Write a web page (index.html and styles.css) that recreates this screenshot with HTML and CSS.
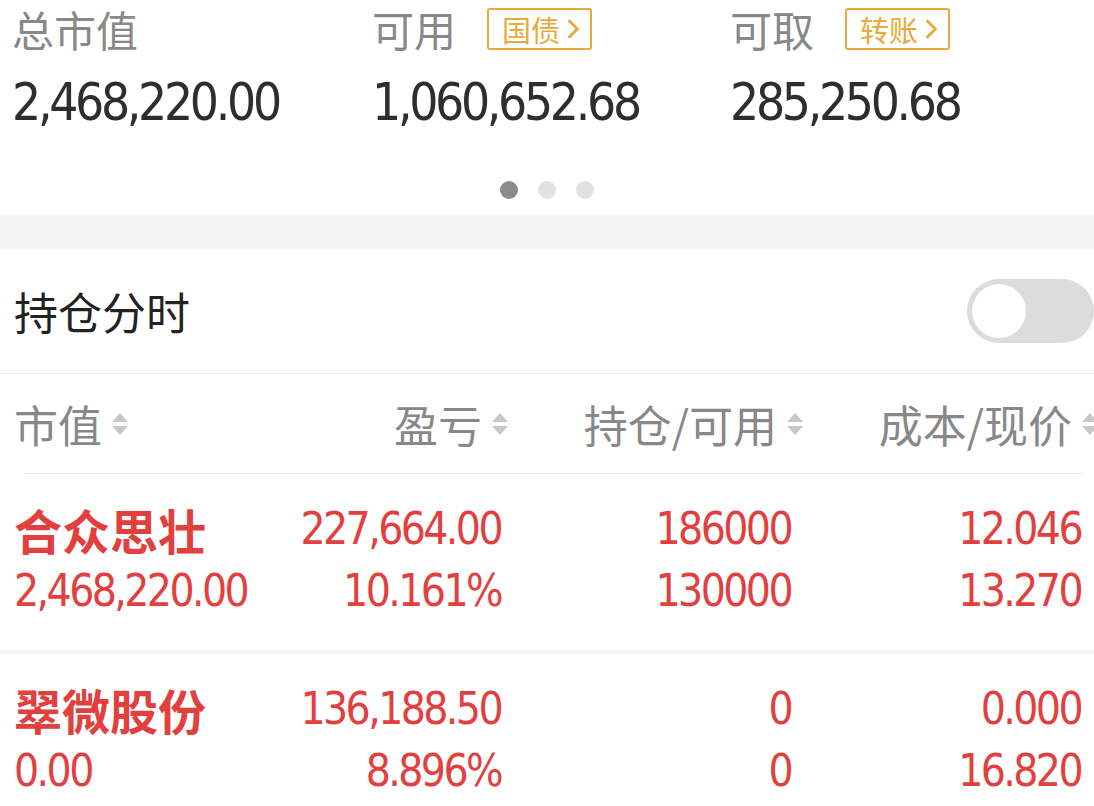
FILE: index.html
```html
<!DOCTYPE html>
<html lang="zh-CN">
<head>
    <meta charset="UTF-8">
    <meta name="viewport" content="width=device-width, initial-scale=1.0">
    <title>持仓</title>
    <link rel="stylesheet" href="styles.css">
</head>
<body>
    <div class="page">
        <div class="summary">
            <div class="cell">
                <div class="label-row"><span class="label">总市值</span></div>
                <div class="value num">2,468,220.00</div>
            </div>
            <div class="cell">
                <div class="label-row">
                    <span class="label">可用</span>
                    <span class="tag">国债<svg class="chev" viewBox="0 0 12 20"><path d="M2 2 L10 10 L2 18" /></svg></span>
                </div>
                <div class="value num">1,060,652.68</div>
            </div>
            <div class="cell">
                <div class="label-row">
                    <span class="label">可取</span>
                    <span class="tag">转账<svg class="chev" viewBox="0 0 12 20"><path d="M2 2 L10 10 L2 18" /></svg></span>
                </div>
                <div class="value num">285,250.68</div>
            </div>
        </div>

        <div class="dots">
            <span class="dot active"></span>
            <span class="dot"></span>
            <span class="dot"></span>
        </div>

        <div class="band"></div>

        <div class="switch-row">
            <span class="switch-title">持仓分时</span>
            <span class="toggle"><span class="knob"></span></span>
        </div>

        <div class="table">
            <div class="thead">
                <div class="th c1">市值<svg class="sort" viewBox="0 0 20 24"><path d="M10 1 L18 10 L2 10 Z" /><path d="M2 14 L18 14 L10 23 Z" /></svg></div>
                <div class="th c2">盈亏<svg class="sort" viewBox="0 0 20 24"><path d="M10 1 L18 10 L2 10 Z" /><path d="M2 14 L18 14 L10 23 Z" /></svg></div>
                <div class="th c3">持仓/可用<svg class="sort" viewBox="0 0 20 24"><path d="M10 1 L18 10 L2 10 Z" /><path d="M2 14 L18 14 L10 23 Z" /></svg></div>
                <div class="th c4">成本/现价<svg class="sort" viewBox="0 0 20 24"><path d="M10 1 L18 10 L2 10 Z" /><path d="M2 14 L18 14 L10 23 Z" /></svg></div>
            </div>

            <div class="row">
                <div class="td c1"><div class="name">合众思壮</div><div class="num">2,468,220.00</div></div>
                <div class="td c2"><div class="num">227,664.00</div><div class="num">10.161%</div></div>
                <div class="td c3"><div class="num">186000</div><div class="num">130000</div></div>
                <div class="td c4"><div class="num">12.046</div><div class="num">13.270</div></div>
            </div>

            <div class="row">
                <div class="td c1"><div class="name">翠微股份</div><div class="num">0.00</div></div>
                <div class="td c2"><div class="num">136,188.50</div><div class="num">8.896%</div></div>
                <div class="td c3"><div class="num">0</div><div class="num">0</div></div>
                <div class="td c4"><div class="num">0.000</div><div class="num">16.820</div></div>
            </div>
        </div>
    </div>
</body>
</html>
```

FILE: styles.css
```css
body {
    margin: 0;
    background-color: #fff;
    font-family: "Noto Sans CJK SC", "Noto Sans", sans-serif;
    overflow: hidden;
}

.page {
    width: 1112px;
}

.num {
    font-family: "DejaVu Sans Condensed", "DejaVu Sans", sans-serif;
}

/* top summary */
.summary {
    display: grid;
    grid-template-columns: 360px 358px 358px;
    padding-left: 12px;
}

.label-row {
    display: flex;
    align-items: center;
    height: 58px;
}

.label {
    font-size: 42px;
    color: #888;
    line-height: 1;
}

.tag {
    display: flex;
    align-items: center;
    margin-left: 31px;
    height: 38px;
    padding: 0 10px 0 13px;
    border: 2.5px solid #e9a93b;
    border-radius: 3px;
    color: #e9a93b;
    font-size: 29px;
    line-height: 1;
}

.chev {
    width: 14px;
    height: 22px;
    margin-left: 6px;
}

.chev path {
    fill: none;
    stroke: #e9a93b;
    stroke-width: 2.6;
}

.value {
    margin-top: 16px;
    height: 58px;
    line-height: 58px;
    font-size: 51px;
    letter-spacing: -3.3px;
    color: #2e2e2e;
}

.dots {
    display: flex;
    justify-content: center;
    gap: 20px;
    width: 1094px;
    margin-top: 49px;
    margin-bottom: 16px;
}

.dot {
    width: 18px;
    height: 18px;
    border-radius: 50%;
    background-color: #e2e2e2;
}

.dot.active {
    background-color: #8a8a8a;
}

.band {
    height: 34px;
    background-color: #f5f5f5;
}

/* switch row */
.switch-row {
    display: flex;
    align-items: center;
    justify-content: space-between;
    height: 124px;
    padding: 0 0 0 14px;
    border-bottom: 1px solid #ececec;
    width: 1080px;
}

.switch-title {
    font-size: 44px;
    color: #222;
}

.toggle {
    display: flex;
    align-items: center;
    width: 127px;
    height: 64px;
    border-radius: 32px;
    background-color: #dcdcdc;
    padding-left: 5px;
    box-sizing: border-box;
}

.knob {
    width: 54px;
    height: 54px;
    border-radius: 50%;
    background-color: #fff;
}

/* table */
.table {
    padding-left: 14px;
}

.thead,
.row {
    display: grid;
    grid-template-columns: 250px 246px 295px 295px;
}

.thead {
    grid-template-columns: 240px 246px 295px 295px;
    width: 1062px;
    height: 99px;
    margin-left: 10px;
    align-items: center;
    border-bottom: 1px solid #eeeeee;
}

.th {
    display: flex;
    align-items: center;
    justify-content: flex-end;
    font-size: 44px;
    color: #888;
    line-height: 1;
}

.th.c1 {
    justify-content: flex-start;
    margin-left: -10px;
}

.sort {
    width: 20px;
    height: 24px;
    margin-left: 8px;
}

.sort path {
    fill: #c8c8c8;
}

.row {
    margin-left: -14px;
    padding: 24px 0 28px 14px;
    border-bottom: 4px solid #f3f3f3;
}

.td {
    color: #e2403f;
    text-align: right;
}

.td > div {
    height: 62px;
    line-height: 62px;
    font-size: 44px;
    letter-spacing: -2.6px;
}

.td.c1 {
    text-align: left;
}

.td .name {
    font-family: "Noto Sans CJK SC", sans-serif;
    font-size: 48px;
    font-weight: bold;
    letter-spacing: 0;
}

.td.c2 {
    padding-right: 9px;
}

.td.c3 {
    padding-right: 14px;
}

.td.c4 {
    padding-right: 19px;
}
```
